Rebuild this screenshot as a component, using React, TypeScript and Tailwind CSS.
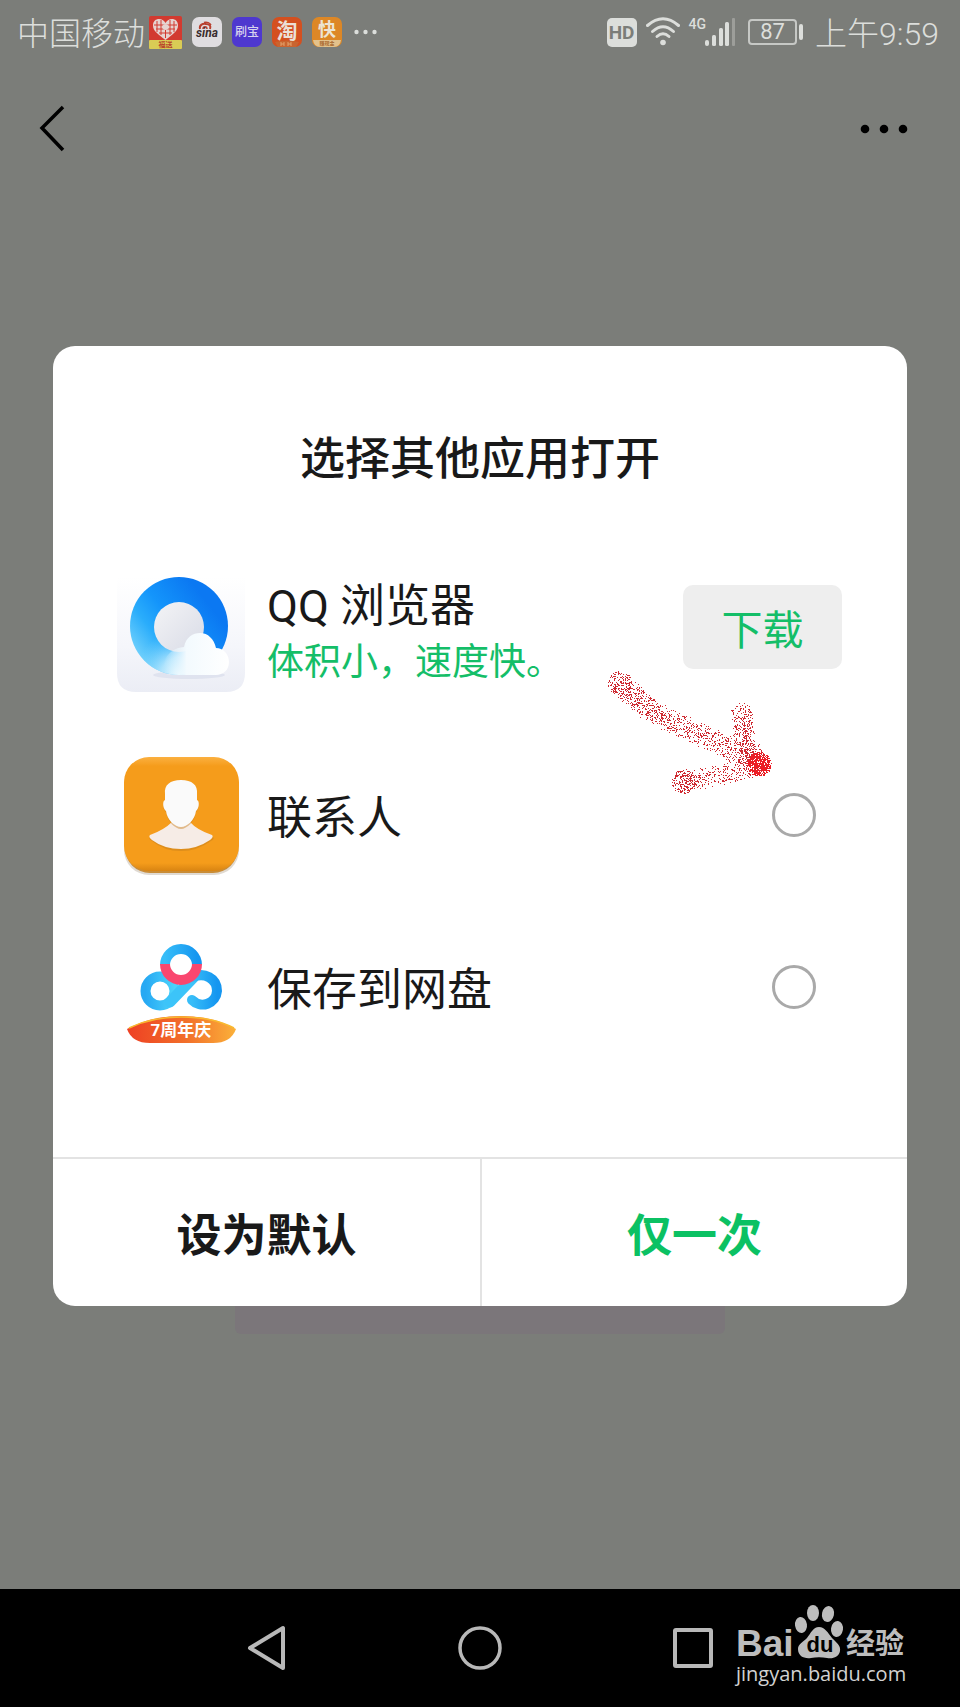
import type { ReactNode } from 'react'

type Point = [number, number]

// Small seeded generator so the spray looks the same on every render
function createRandom(seed: number) {
  let state = seed
  return () => {
    state = (state * 1664525 + 1013904223) % 4294967296
    return state / 4294967296
  }
}

/**
 * Scatters single pixel dots along a polyline, like an airbrush stroke
 */
function sprayStroke(points: Point[], radius: number, count: number, seed: number) {
  const random = createRandom(seed)
  const segments = Math.max(points.length - 1, 1)
  let path = ''
  for (let i = 0; i < count; i++) {
    const t = random() * segments
    const index = Math.min(Math.floor(t), segments - 1)
    const from = points[index]
    const to = points[index + 1] ?? from
    const angle = random() * Math.PI * 2
    const distance = Math.sqrt(random()) * radius
    const x = Math.round(from[0] + (to[0] - from[0]) * (t - index) + Math.cos(angle) * distance)
    const y = Math.round(from[1] + (to[1] - from[1]) * (t - index) + Math.sin(angle) * distance)
    path += `M${x} ${y}h1v1h-1z`
  }
  return path
}

const arrowStrokes = [
  sprayStroke([[20, 23], [44, 46], [77, 64], [118, 82], [156, 102]], 12, 1000, 7),
  sprayStroke([[20, 23]], 12, 110, 11),
  sprayStroke([[142, 50], [143, 76], [158, 104]], 11, 430, 23),
  sprayStroke([[83, 121], [120, 115], [156, 105]], 11, 330, 31),
  sprayStroke([[83, 121]], 12, 170, 43),
  sprayStroke([[159, 104]], 12, 560, 59),
]

function SprayArrow() {
  return (
    <svg
      width="180"
      height="140"
      viewBox="0 0 180 140"
      shapeRendering="crispEdges"
      className="absolute left-[547px] top-[314px] pointer-events-none"
      aria-hidden="true"
    >
      {arrowStrokes.map((d, i) => (
        <path key={i} d={d} fill={i === 5 ? '#ed1c24' : '#cf2a31'} />
      ))}
    </svg>
  )
}

function NotificationIcons() {
  return (
    <div className="flex items-center gap-[10px]" aria-hidden="true">
      <svg width="33" height="33" viewBox="0 0 33 33">
        <rect width="33" height="33" rx="2" fill="#d23a30" />
        <rect y="24" width="33" height="9" rx="1" fill="#d9cc55" />
        <path d="M16.500 24C9 18 4 15 4 9.500C4 5 7 3 10 3C13 3 15.500 5 16.500 7C17.500 5 20 3 23 3C26 3 29 5 29 9.500C29 15 24 18 16.500 24Z" fill="#e6d3d0" />
        <path d="M8 5v11M12 4v15M16.500 8v14M21 4v15M25 5v11M5 9h23M7 13h19M10 17h13" stroke="#d23a30" strokeWidth="1" />
        <circle cx="16.500" cy="11" r="3" fill="#e6d3d0" />
        <text x="16.500" y="31" textAnchor="middle" fontSize="7" fontWeight="700" fill="#b8452c">福送</text>
      </svg>
      <svg width="30" height="30" viewBox="0 0 30 30">
        <rect width="30" height="30" rx="7" fill="#dfdde0" />
        <path d="M8 12C7 8 11 6 14 7C18 7 19 9 18 12" fill="none" stroke="#b8402f" strokeWidth="2" />
        <path d="M11 12C11 9 15 9 15 12M12 5.500C15 4.500 18 6 19 8" fill="none" stroke="#b8402f" strokeWidth="1.500" />
        <text x="15" y="20" textAnchor="middle" fontSize="12" fontWeight="700" fontStyle="italic" fill="#3a2d2d">sina</text>
      </svg>
      <svg width="30" height="30" viewBox="0 0 30 30">
        <rect width="30" height="30" rx="7" fill="#4e38cf" />
        <text x="15" y="19" textAnchor="middle" fontSize="12" fontWeight="500" fill="#d6d2ee">刷宝</text>
      </svg>
      <svg width="30" height="30" viewBox="0 0 30 30">
        <rect width="30" height="30" rx="7" fill="#d4501f" />
        <text x="15" y="21" textAnchor="middle" fontSize="21" fontWeight="700" fill="#ebdfd6">淘</text>
        <path d="M3 25Q15 22 27 25L24 30H6Z" fill="#c9642f" />
        <path d="M9 25v4M12 25v4M9 27h3M16 25v4M19 25v4M16 27h3" stroke="#e3a26c" strokeWidth="1" />
      </svg>
      <svg width="30" height="30" viewBox="0 0 30 30">
        <rect width="30" height="30" rx="7" fill="#dd8726" />
        <text x="15" y="19" textAnchor="middle" fontSize="18" fontWeight="700" fill="#ece4d4">快</text>
        <path d="M1 23H29Q28 30 22 30H8Q2 30 1 23Z" fill="#e3c28c" />
        <text x="15" y="28" textAnchor="middle" fontSize="5" fontWeight="700" fill="#a8672e">赚现金</text>
      </svg>
    </div>
  )
}

function StatusBar() {
  return (
    <div className="h-16 pl-[17px] pr-[21px] flex items-center justify-between text-[#dcdedb]">
      <div className="flex items-center gap-[4px]">
        <span className="pt-1 text-[32px] leading-[40px] font-light">中国移动</span>
        <NotificationIcons />
        <svg width="24" height="6" viewBox="0 0 24 6" className="ml-2" fill="currentColor" aria-hidden="true">
          <circle cx="2.500" cy="3" r="2.200" />
          <circle cx="11.500" cy="3" r="2.200" />
          <circle cx="20.500" cy="3" r="2.200" />
        </svg>
      </div>

      <div className="flex items-center gap-[9px]">
        <span className="w-[30px] h-[29px] rounded-[5px] bg-[#dcdedb] text-[#7b7d79] text-[19px] leading-[29px] font-bold text-center">
          HD
        </span>
        <svg width="34" height="30" viewBox="0 0 34 30" fill="none" stroke="currentColor" strokeWidth="3" strokeLinecap="round" aria-hidden="true">
          <path d="M1.500 8.500Q17 -5 32.500 8.500" />
          <path d="M6.500 14.500Q17 5 27.500 14.500" />
          <path d="M11 19.500Q17 14 23 19.500" />
          <circle cx="17" cy="25.500" r="2.800" fill="currentColor" stroke="none" />
        </svg>
        <div className="flex items-start">
          <span className="text-[14px] leading-[14px] font-medium">4G</span>
          <svg width="31" height="30" viewBox="0 0 31 30" fill="currentColor" className="-ml-px" aria-hidden="true">
            <rect x="0" y="23" width="4" height="6" rx="2" />
            <rect x="7" y="18" width="4" height="11" rx="1.500" />
            <rect x="14" y="11" width="4" height="18" rx="1.500" />
            <rect x="20" y="5" width="4" height="24" rx="1.500" />
            <rect x="27" y="1" width="3" height="28" rx="1" opacity="0.350" />
          </svg>
        </div>
        <div className="flex items-center gap-[2px] mx-[3px]">
          <span className="w-[49px] h-[26px] rounded-[4px] border-2 border-[#c6c8c5] text-[22px] leading-[22px] text-center">
            87
          </span>
          <span className="w-1 h-4 rounded-[2px] bg-[#dcdedb]" />
        </div>
        <span className="pt-1 text-[32px] leading-[40px] font-light">上午9:59</span>
      </div>
    </div>
  )
}

function BrowserIcon() {
  return (
    <svg width="128" height="116" viewBox="0 0 128 116" aria-hidden="true">
      <defs>
        <linearGradient id="tile" x1="0" y1="0" x2="0" y2="1">
          <stop offset="0" stopColor="#ffffff" />
          <stop offset="0.600" stopColor="#f5f6fb" />
          <stop offset="1" stopColor="#ebedf5" />
        </linearGradient>
        <linearGradient id="ring" x1="0.900" y1="0.400" x2="0.200" y2="0.950">
          <stop offset="0" stopColor="#0b78f2" />
          <stop offset="0.450" stopColor="#1495fb" />
          <stop offset="0.700" stopColor="#2aadfb" />
          <stop offset="1" stopColor="#6fd0fc" />
        </linearGradient>
        <radialGradient id="glow" cx="0.500" cy="1" r="0.450">
          <stop offset="0" stopColor="#e6f7fe" />
          <stop offset="0.400" stopColor="#c0eafd" stopOpacity="0.850" />
          <stop offset="1" stopColor="#6fd0fc" stopOpacity="0" />
        </radialGradient>
        <linearGradient id="hole" x1="0" y1="0" x2="1" y2="1">
          <stop offset="0" stopColor="#f4f4f6" />
          <stop offset="1" stopColor="#d8dbe6" />
        </linearGradient>
        <linearGradient id="cloud" x1="0" y1="0" x2="1" y2="0">
          <stop offset="0" stopColor="#e6f7fe" stopOpacity="0" />
          <stop offset="0.350" stopColor="#f3fafe" />
          <stop offset="1" stopColor="#ffffff" />
        </linearGradient>
      </defs>
      <path d="M0 0H128V96Q128 115 109 115H19Q0 115 0 96Z" fill="url(#tile)" />
      <ellipse cx="72" cy="98" rx="36" ry="4" fill="#d5dae9" opacity="0.600" />
      <circle cx="62" cy="49" r="49" fill="url(#ring)" />
      <circle cx="62" cy="49" r="49" fill="url(#glow)" />
      <circle cx="62" cy="50" r="25" fill="url(#hole)" />
      <path d="M50 98C42 92 48 71 67 70C69 60 76 56 83 56C91 56 97 62 99 71C106 71 112 77 112 85C112 93 106 98 99 98Z" fill="url(#cloud)" />
    </svg>
  )
}

function ContactsIcon() {
  return (
    <svg width="128" height="128" viewBox="0 0 128 128" aria-hidden="true">
      <defs>
        <linearGradient id="orange" x1="0" y1="0" x2="0" y2="1">
          <stop offset="0" stopColor="#fbb040" />
          <stop offset="0.080" stopColor="#f59c1b" />
          <stop offset="0.930" stopColor="#f59c1b" />
          <stop offset="1" stopColor="#d98412" />
        </linearGradient>
      </defs>
      <rect x="7" y="9" width="115" height="115" rx="25" fill="#e0dad2" />
      <rect x="8" y="8" width="113" height="114" rx="25" fill="#c98c36" />
      <rect x="7" y="6" width="115" height="114" rx="25" fill="url(#orange)" />
      <path d="M33 86Q47 80 55 72H73Q80 80 96 86Q98 88 94 90Q80 100 64 100Q47 100 35 90Q31 88 33 86Z" fill="#c77f1c" opacity="0.500" />
      <path d="M33 84Q47 79 55 71H73Q80 79 95 84Q97 86 93 89Q80 98 64 98Q47 98 35 89Q31 86 33 84Z" fill="#f6ece6" />
      <path d="M48 44C47 36 53 31 64 31C75 31 81 36 80 44V50C83 51 82 59 79 61C78 70 70 78 64 78C58 78 50 70 49 61C46 59 45 51 48 50Z" fill="#c77f1c" opacity="0.450" />
      <path d="M48 43C47 34 53 29 64 29C75 29 81 34 80 43V49C83 50 82 58 79 60C78 69 70 76 64 76C58 76 50 69 49 60C46 58 45 50 48 49Z" fill="#fafafa" />
    </svg>
  )
}

function NetdiskIcon() {
  return (
    <svg width="128" height="128" viewBox="0 -8 128 128" aria-hidden="true">
      <defs>
        <linearGradient id="blueLeft" x1="0" y1="0" x2="1" y2="0">
          <stop offset="0" stopColor="#27a9f3" />
          <stop offset="1" stopColor="#4bd3fb" />
        </linearGradient>
        <linearGradient id="blueRight" x1="0" y1="0" x2="1" y2="0">
          <stop offset="0" stopColor="#37bdf8" />
          <stop offset="1" stopColor="#1596f0" />
        </linearGradient>
        <linearGradient id="ribbon" x1="0" y1="0" x2="1" y2="0">
          <stop offset="0" stopColor="#ee4023" />
          <stop offset="0.550" stopColor="#f2702a" />
          <stop offset="1" stopColor="#fbb13a" />
        </linearGradient>
      </defs>
      <g fill="none" strokeWidth="10" strokeLinecap="round">
        <circle cx="43" cy="60" r="14.500" stroke="url(#blueLeft)" />
        <path d="M53 71L77 46" stroke="#3cc4f9" strokeWidth="11" />
        <path d="M76 46C87 41 100 47 100 60A14.500 14.500 0 0 1 75 69" stroke="url(#blueRight)" />
        <path d="M48 34A16 16 0 0 1 80 34" stroke="url(#blueRight)" strokeLinecap="butt" />
        <path d="M48 33A16 16 0 0 0 80 33" stroke="#f9476f" strokeLinecap="butt" />
      </g>
      <path d="M10 98Q34 85 64 85Q96 85 119 98Q114 112 96 112H33Q15 112 10 98Z" fill="url(#ribbon)" />
      <path d="M12 97Q34 86 64 86Q96 86 117 97" fill="none" stroke="#f9b92f" strokeWidth="1.500" />
      <text x="64" y="105" textAnchor="middle" fontSize="17" fontWeight="700" fill="#ffffff">7周年庆</text>
    </svg>
  )
}

interface AppOptionProps {
  id: string
  label: string
  icon: ReactNode
}

function AppOption({ id, label, icon }: AppOptionProps) {
  return (
    <li className="h-[172px] flex items-center gap-[22px]">
      {icon}
      <label htmlFor={id} className="flex-1 pt-2 text-[45px] leading-[54px]">
        {label}
      </label>
      <input
        id={id}
        type="radio"
        name="app"
        className="appearance-none w-11 h-11 mr-[26px] rounded-full border-[3px] border-[#a9a9a9] bg-white checked:border-[#07c160]"
      />
    </li>
  )
}

function OpenWithDialog() {
  return (
    <section
      role="dialog"
      aria-labelledby="dialog-title"
      className="relative rounded-[22px] bg-white text-[#191919] overflow-hidden"
    >
      <h1 id="dialog-title" className="h-[195px] pt-8 flex items-center justify-center text-[45px] leading-[54px] font-medium">
        选择其他应用打开
      </h1>

      <ul className="pl-16 pr-[65px] pb-[84px]">
        {/* Recommended app, has to be downloaded first */}
        <li className="h-[188px] pt-9 flex items-start gap-[22px]">
          <BrowserIcon />
          <div className="flex-1 pt-[3px]">
            <p className="text-[45px] leading-[54px]">QQ 浏览器</p>
            <p className="text-[37px] leading-[58px] text-[#14be68]">体积小，速度快。</p>
          </div>
          <button
            type="button"
            className="w-[159px] h-[84px] mt-2 pt-2 rounded-[10px] bg-[#eeeeee] text-[41px] leading-[54px] text-[#14be68]"
          >
            下载
          </button>
        </li>
        <AppOption id="contacts" label="联系人" icon={<ContactsIcon />} />
        <AppOption id="netdisk" label="保存到网盘" icon={<NetdiskIcon />} />
      </ul>

      <div className="h-[149px] grid grid-cols-2 border-t-2 border-[#e3e3e3] text-[45px] leading-[54px] font-bold">
        <button type="button" className="pt-2">设为默认</button>
        <button type="button" className="pt-2 border-l-2 border-[#e3e3e3] text-[#0bc163]">仅一次</button>
      </div>

      <SprayArrow />
    </section>
  )
}

function Watermark() {
  return (
    <a href="#" className="absolute right-[52px] top-[10px] text-[#bdbdbd]">
      <svg width="172" height="64" viewBox="0 -3 172 64" fill="currentColor" role="img" aria-label="Baidu 经验">
        <text x="0" y="54" fontFamily="Liberation Sans" fontSize="37" fontWeight="700">Bai</text>
        <ellipse cx="65" cy="23" rx="6" ry="8" transform="rotate(-8 65 23)" />
        <ellipse cx="77" cy="11" rx="6" ry="8" />
        <ellipse cx="92" cy="12" rx="6" ry="8" transform="rotate(12 92 12)" />
        <ellipse cx="101" cy="27" rx="6" ry="8" transform="rotate(8 101 27)" />
        <path d="M83 25C89 25 92 31 96 36C101 41 105 44 104 49C103 55 97 57 91 56C86 55 80 55 75 56C68 57 62 54 62 47C62 42 67 40 71 36C75 31 77 25 83 25Z" />
        <text x="84" y="50" textAnchor="middle" fontFamily="Liberation Sans" fontSize="22" fontWeight="700" fill="#000000">du</text>
        <text x="110" y="52" fontSize="29" fontWeight="700">经验</text>
      </svg>
      <span className="block text-[20px] leading-[22px] text-[#d2d2d2] font-['Open_Sans','Noto_Sans',sans-serif]">
        jingyan.baidu.com
      </span>
    </a>
  )
}

function NavigationBar() {
  return (
    <nav className="relative h-[118px] bg-black flex items-center justify-center gap-[170px]">
      <button type="button" aria-label="Back">
        <svg width="44" height="48" viewBox="0 0 44 48" fill="none" stroke="#b8b8b8" strokeWidth="4" strokeLinejoin="round">
          <path d="M39 4V44L6 24Z" />
        </svg>
      </button>
      <button type="button" aria-label="Home">
        <svg width="44" height="48" viewBox="0 0 44 48" fill="none" stroke="#b8b8b8" strokeWidth="3.500">
          <circle cx="22" cy="24" r="20" />
        </svg>
      </button>
      <button type="button" aria-label="Recent apps">
        <svg width="44" height="48" viewBox="0 0 44 48" fill="none" stroke="#b8b8b8" strokeWidth="4">
          <rect x="3" y="6" width="36" height="36" rx="1" />
        </svg>
      </button>
      <Watermark />
    </nav>
  )
}

export default function App() {
  return (
    <div className="min-h-screen flex flex-col bg-[#7b7d79] font-['Roboto','Noto_Sans_CJK_SC',sans-serif]">
      <StatusBar />
      <header className="h-[130px] px-[38px] flex items-center justify-between">
        <button type="button" aria-label="Back">
          <svg width="28" height="48" viewBox="0 0 28 48" fill="none" stroke="#000000" strokeWidth="3.500">
            <path d="M25 2L4 23L25 45" />
          </svg>
        </button>
        <button type="button" aria-label="More" className="pr-3">
          <svg width="50" height="12" viewBox="0 0 50 12" fill="#000000">
            <circle cx="5" cy="6" r="4.300" />
            <circle cx="24" cy="6" r="4.300" />
            <circle cx="43" cy="6" r="4.300" />
          </svg>
        </button>
      </header>

      <main className="flex-1 px-[53px] pt-[152px] pb-10">
        <OpenWithDialog />
        {/* Page button that peeks out below the dialog */}
        <div className="h-7 mx-[182px] rounded-b-md bg-[#7b767a]" />
      </main>

      <NavigationBar />
    </div>
  )
}
